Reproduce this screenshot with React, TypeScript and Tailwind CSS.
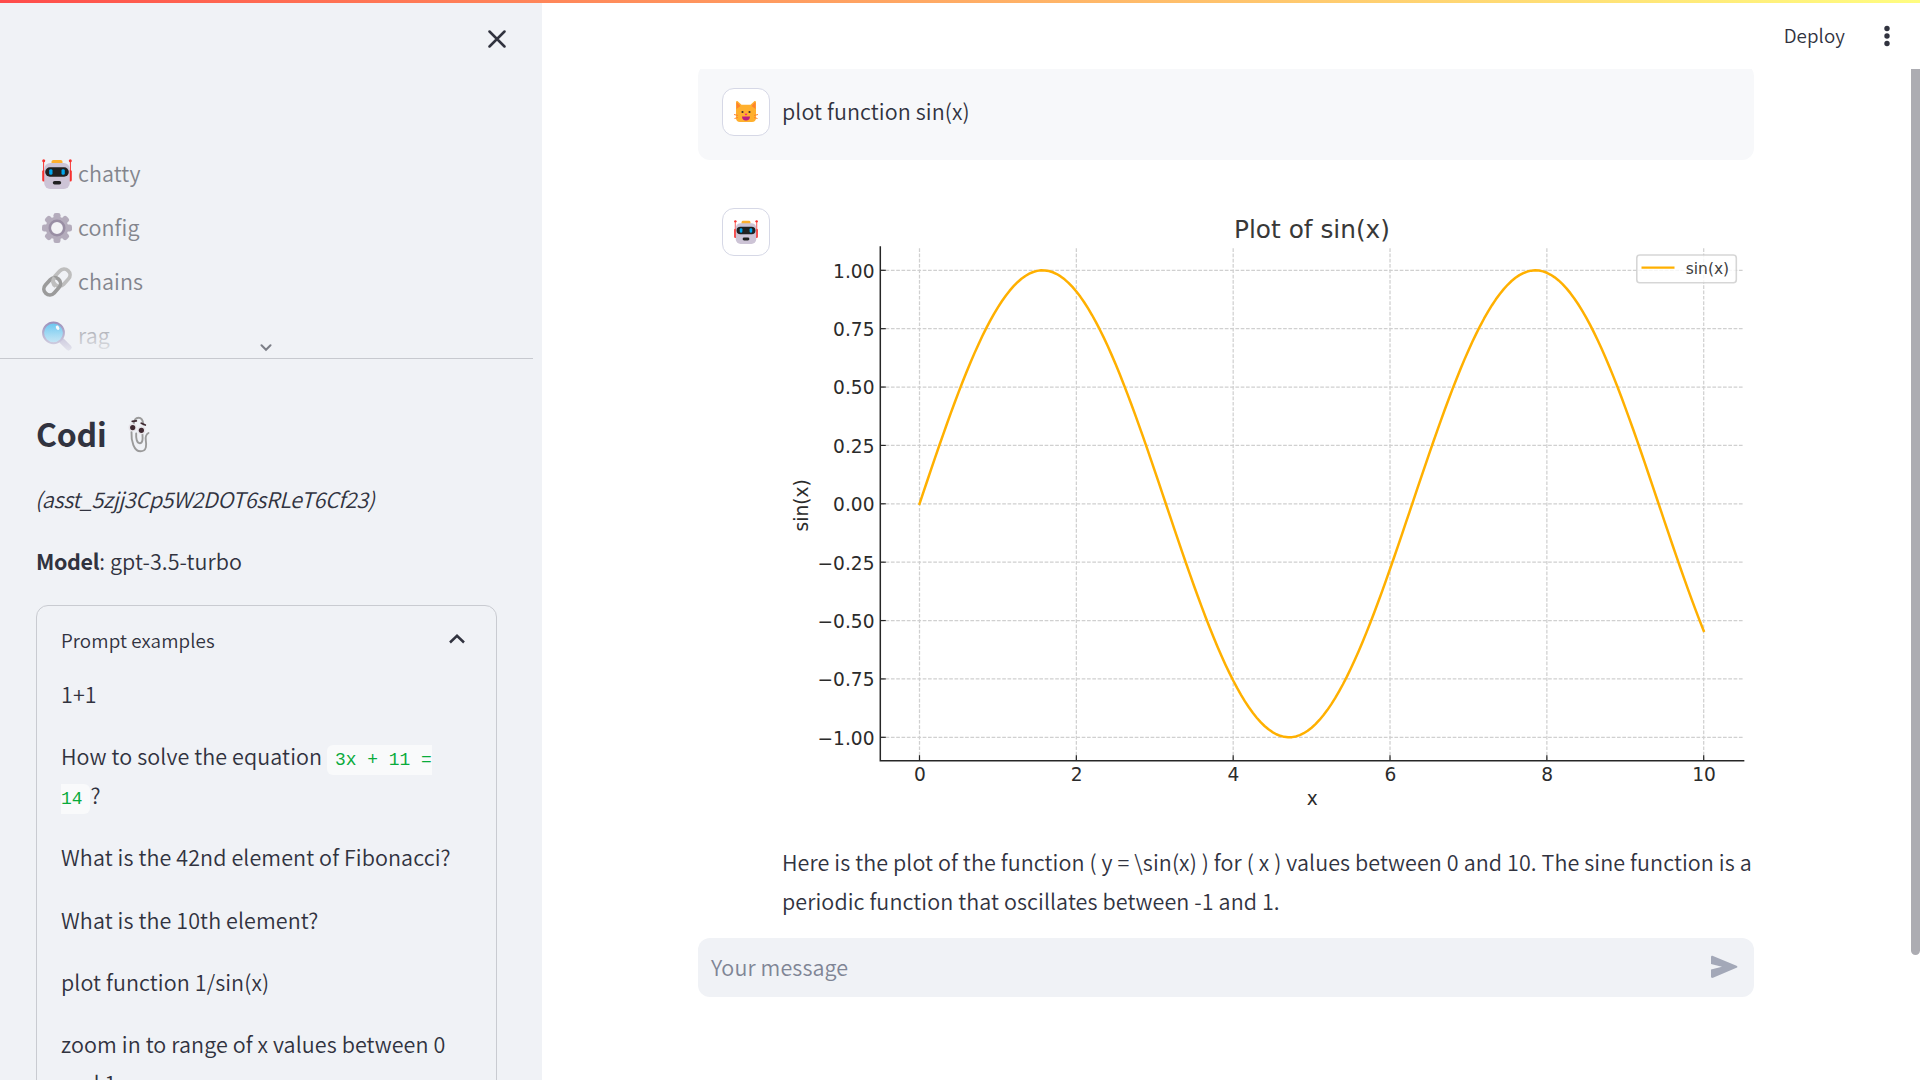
import React from "react";

const X0 = 919.5 - 783;
const XS = 78.42;
const Y0 = 503.8 - 208;
const YS = 233.5;
const LEFT = 97.3;
const RIGHT = 960.6;
const TOP = 39;
const BOTTOM = 552.7;

const px = (v: number) => X0 + v * XS;
const py = (v: number) => Y0 - v * YS;

const curve = Array.from({ length: 201 }, (_, i) => {
  const x = i / 20;
  return `${i === 0 ? "M" : "L"}${px(x).toFixed(2)} ${py(Math.sin(x)).toFixed(2)}`;
}).join("");

const xTicks = [0, 2, 4, 6, 8, 10];
const yTicks = [1, 0.75, 0.5, 0.25, 0, -0.25, -0.5, -0.75, -1];

function SineChart() {
  return (
    <svg width="971" height="610" viewBox="0 0 971 610" className="block font-['DejaVu_Sans'] font-normal tracking-normal" fill="#2b2b2b">
      <g stroke="#d0d0d0" strokeWidth="1.25" strokeDasharray="3.7 1.6" fill="none">
        {xTicks.map((t) => (
          <path key={t} d={`M${px(t)} ${BOTTOM}V${TOP}`} />
        ))}
        {yTicks.map((t) => (
          <path key={t} d={`M${LEFT} ${py(t)}H${RIGHT}`} />
        ))}
      </g>
      <path d={curve} fill="none" stroke="#FFB000" strokeWidth="2.5" strokeLinejoin="round" strokeLinecap="square" />
      <g stroke="#262626" strokeWidth="1.5" fill="none">
        <path d={`M${LEFT} ${TOP}V${BOTTOM}H${RIGHT}`} strokeLinecap="square" />
        {xTicks.map((t) => (
          <path key={t} d={`M${px(t)} ${BOTTOM}v-5.5`} strokeWidth="1.2" />
        ))}
        {yTicks.map((t) => (
          <path key={t} d={`M${LEFT} ${py(t)}h5.5`} strokeWidth="1.2" />
        ))}
      </g>
      <g fontSize="18.6">
        {xTicks.map((t) => (
          <text key={t} x={px(t) + 0.3} y="572.8" textAnchor="middle">{t}</text>
        ))}
        {yTicks.map((t) => (
          <text key={t} x="91.5" y={py(t) + 7.4} textAnchor="end">
            {t.toFixed(2).replace("-", "−")}
          </text>
        ))}
        <text x="529.3" y="597" textAnchor="middle">x</text>
        <text transform="translate(25 297.3) rotate(-90)" textAnchor="middle">sin(x)</text>
      </g>
      <text x="529" y="30" fontSize="24.8" textAnchor="middle" fill="#383838">Plot of sin(x)</text>
      <rect x="853.8" y="47" width="99.5" height="27.8" rx="3" fill="#fff" fillOpacity="0.8" stroke="#cccccc" strokeOpacity="0.8" strokeWidth="1.6" />
      <path d="M858.5 59.6h33" stroke="#FFB000" strokeWidth="2.4" />
      <text x="902.7" y="65.7" fontSize="15.5" fill="#404040">sin(x)</text>
    </svg>
  );
}

function Robot({ className }: { className: string }) {
  return (
    <svg viewBox="0 0 30 30" className={className}>
      <path d="M1.6 1.5v14M28.4 1.5v14" stroke="#F8312F" strokeWidth="1" />
      <circle cx="1.7" cy="1.7" r="1.5" fill="#F8312F" />
      <circle cx="28.3" cy="1.7" r="1.5" fill="#F8312F" />
      <rect x="0.2" y="11" width="4" height="11.5" rx="1.5" fill="#F8312F" />
      <rect x="25.8" y="11" width="4" height="11.5" rx="1.5" fill="#F8312F" />
      <rect x="9.5" y="1" width="11" height="6" rx="1.8" fill="#FFB02E" />
      <rect x="2.2" y="4" width="25.6" height="26" rx="6" fill="#CDC4D6" />
      <rect x="3.2" y="8.3" width="23.6" height="9.4" rx="4.7" fill="#212121" />
      <rect x="7.2" y="10.2" width="3.3" height="5.6" rx="1.4" fill="#00A6ED" />
      <rect x="19.5" y="10.2" width="3.3" height="5.6" rx="1.4" fill="#00A6ED" />
      <rect x="10.8" y="22" width="8.4" height="3.6" rx="1.8" fill="#212121" />
    </svg>
  );
}

function Gear() {
  return (
    <svg viewBox="0 0 30 30" className="size-[30px]">
      {[0, 45, 90, 135].map((a) => (
        <rect key={a} x="11.5" y="0" width="7" height="30" rx="2.3" fill="#B4ACBC" transform={`rotate(${a} 15 15)`} />
      ))}
      <circle cx="15" cy="15" r="11.3" fill="#B4ACBC" />
      <circle cx="15" cy="15" r="7.2" fill="#F3F3F6" stroke="#998EA4" strokeWidth="2.6" />
    </svg>
  );
}

function Chain() {
  return (
    <svg viewBox="0 0 30 30" className="size-[30px]" fill="none" strokeWidth="3.7">
      <rect x="10.2" y="4.7" width="19" height="11.8" rx="5.9" stroke="#BEBEBE" transform="rotate(-48 19.7 10.6)" />
      <rect x="0.7" y="13.4" width="19" height="11.8" rx="5.9" stroke="#9B9B9B" transform="rotate(-48 10.2 19.3)" />
      <path d="M12.5 10.4C9.8 13.500 10.600 17.500 13.600 19" stroke="#BEBEBE" />
    </svg>
  );
}

function Magnifier() {
  return (
    <svg viewBox="0 0 30 30" className="size-[30px]">
      <defs>
        <linearGradient id="lens" x1="0" y1="0" x2="0" y2="1">
          <stop offset="0" stopColor="#35B5EE" />
          <stop offset="1" stopColor="#6CCBF2" />
        </linearGradient>
      </defs>
      <path d="M20.500 20.500l6 6" stroke="#9D94BC" strokeWidth="6" strokeLinecap="round" />
      <circle cx="11.5" cy="11.8" r="10.4" fill="url(#lens)" stroke="#8070A8" strokeWidth="2" />
      <ellipse cx="15.6" cy="6.8" rx="1.6" ry="2.3" fill="#fff" transform="rotate(-30 15.6 6.8)" />
    </svg>
  );
}

function Cat() {
  return (
    <svg viewBox="0 0 24 24" className="size-6">
      <path d="M2 10V2.500C2 1 3 .6 4 1.500L7.500 4.800h9L20 1.500c1-.9 2-.5 2 1V18c0 2.500-1.500 4-4 4H6c-2.500 0-4-1.500-4-4z" fill="#FFB02E" />
      <path d="M2.500 9V3.500c0-1 .5-1.200 1.200-.5L6.500 6zM21.500 9V3.500c0-1-.5-1.200-1.200-.5L17.500 6z" fill="#FF822D" />
      <circle cx="8.5" cy="12" r="1.1" fill="#402A32" />
      <circle cx="15.5" cy="12" r="1.1" fill="#402A32" />
      <path d="M10.500 13.800h3L12 15.400z" fill="#F70A8D" />
      <path d="M8 16.600h8c0 2.500-1.500 4-4 4s-4-1.500-4-4z" fill="#BB1D80" />
      <path d="M0 14.500l4 1M.5 18.500l3.500-1M24 14.500l-4 1M23.500 18.500l-3.500-1" stroke="#FF822D" strokeWidth="1" fill="none" />
    </svg>
  );
}

function Clip() {
  return (
    <svg viewBox="0 0 24 38" className="h-[38px] w-6" fill="none" strokeLinecap="round">
      <path d="M6.500 9C7 4 9 1.800 11.500 1.800S16 4 16.300 8.500M4.500 16C4 25 7 35.300 13.500 35.300c6.500 0 6-6.800 5.300-11-.5-3.500.2-6 2.700-7.300M9.200 17.500c-.3 4.500.5 9.700 3.500 9.700 3.500 0 3-5.500 2.700-9.200" stroke="#9B9B9B" strokeWidth="1.9" />
      <circle cx="5.5" cy="11.5" r="4" fill="#E6E3E8" />
      <circle cx="14.5" cy="14.3" r="4" fill="#E6E3E8" />
      <circle cx="5.7" cy="11.6" r="2.6" fill="#402A32" />
      <circle cx="14.4" cy="14.3" r="2.6" fill="#402A32" />
      <path d="M5.300 5.300l4-.5M14.300 7.200l4 1.800" stroke="#402A32" strokeWidth="1.8" />
    </svg>
  );
}

const pages = [
  { name: "chatty", icon: <Robot className="size-[30px]" /> },
  { name: "config", icon: <Gear /> },
  { name: "chains", icon: <Chain /> },
  { name: "rag", icon: <Magnifier /> },
];

function Sidebar() {
  return (
    <aside className="h-full w-[542px] shrink-0 overflow-hidden bg-[#f0f2f6]">
      <div className="flex h-[145px] justify-end pr-9 pt-[30px]">
        <svg viewBox="0 0 18 18" className="size-[18px]" stroke="#31333F" strokeWidth="2.5" strokeLinecap="round">
          <path d="M1.500 1.500l15 15M16.500 1.500l-15 15" />
        </svg>
      </div>
      <nav className="relative h-[214px] w-[533px] overflow-hidden border-b border-[#c7c9cf]">
        {pages.map((p) => (
          <a key={p.name} className="flex h-[54px] items-center gap-[6px] pl-[42px] leading-[54px] text-[#83858d]">
            <span className="pt-1">{p.icon}</span>
            <span className="pt-0.5">{p.name}</span>
          </a>
        ))}
        <div className="absolute inset-x-0 bottom-0 flex h-[48px] items-end justify-center bg-linear-to-b from-[#f0f2f600] to-[#f0f2f6] pb-[6px] pr-0.5">
          <svg viewBox="0 0 12 8" className="h-2 w-3" fill="none" stroke="#7c7e87" strokeWidth="2" strokeLinecap="round">
            <path d="M1.500 1.200L6 5.800l4.500-4.600" />
          </svg>
        </div>
      </nav>
      <div className="pl-9 pr-[45px] pt-[53px]">
        <h3 className="mb-[25px] flex h-[43px] items-start text-[32px] font-semibold leading-[42px] tracking-[-0.2px]">
          Codi
          <span className="ml-[20px] mt-1"><Clip /></span>
        </h3>
        <p className="-ml-px mb-6 italic tracking-[-0.31px]">(asst_5zjj3Cp5W2DOT6sRLeT6Cf23)</p>
        <p className="mb-6"><b className="font-semibold tracking-[-0.35px]">Model</b>: gpt-3.5-turbo</p>
        <section className="h-[600px] rounded-xl border border-[#c9cbd1] px-6 pt-[17px]">
          <div className="mb-[18.500px] flex items-center justify-between pr-[7px] text-[18.8px] leading-[33.6px]">
            Prompt examples
            <svg viewBox="0 0 16 10" className="mb-px h-2.5 w-4" fill="none" stroke="#31333F" strokeWidth="2.5">
              <path d="M1 8.500L8 1.800l7 6.700" />
            </svg>
          </div>
          <div className="flex flex-col gap-6">
            <p>1+1</p>
            <p className="pr-6">
              How to solve the equation{" "}
              <code className="rounded-md bg-[#f9fafb] px-2 py-[5px] font-['Liberation_Mono',monospace] text-[17.9px] font-normal leading-none tracking-normal text-[#09ab3b]">
                3x + 11 = 14
              </code>
              ?
            </p>
            <p className="whitespace-nowrap">What is the 42nd element of Fibonacci?</p>
            <p>What is the 10th element?</p>
            <p>plot function 1/sin(x)</p>
            <p>zoom in to range of x values between 0 and 1</p>
          </div>
        </section>
      </div>
    </aside>
  );
}

function Avatar({ children }: { children: React.ReactNode }) {
  return (
    <div className="flex size-12 shrink-0 items-center justify-center rounded-xl border border-[#d6d8e6] bg-white">
      {children}
    </div>
  );
}

export default function App() {
  return (
    <div className="relative flex h-[1080px] w-[1920px] overflow-hidden bg-white font-['Noto_Sans_CJK_SC',sans-serif] text-[21.5px] font-[350] leading-[38.4px] tracking-[0.095px] text-[#31333f]">
      <Sidebar />
      <main className="flex min-w-0 flex-1 flex-col">
        <header className="flex h-[69px] shrink-0 items-center justify-end gap-[38px] pr-[29px] pt-[2px] text-[18.8px]">
          Deploy
          <svg viewBox="0 0 8 22" className="h-[22px] w-2" fill="#31333F">
            <circle cx="4" cy="3.5" r="2.7" />
            <circle cx="4" cy="11" r="2.7" />
            <circle cx="4" cy="18.5" r="2.7" />
          </svg>
        </header>
        <div className="flex flex-1 justify-between">
          <div className="ml-[156px] w-[1056px]">
            <div className="h-[91px] overflow-hidden">
              <div className="-mt-[5px] flex h-24 gap-3 rounded-xl bg-[#f7f8fa] pl-6 pt-6">
                <Avatar><Cat /></Avatar>
                <p className="pt-1">plot function sin(x)</p>
              </div>
            </div>
            <div className="flex h-[778px] gap-3 pl-6 pt-12">
              <Avatar><Robot className="size-6" /></Avatar>
              <div className="w-[972px]">
                <div className="pl-px"><SineChart /></div>
                <p className="mt-6 whitespace-nowrap leading-[39px]">
                  Here is the plot of the function ( y = \sin(x) ) for ( x ) values between 0 and 10. The sine function is a
                  <br />
                  periodic function that oscillates between -1 and 1.
                </p>
              </div>
            </div>
            <div className="flex h-[59px] items-center justify-between rounded-xl bg-[#f0f2f6] pl-[13px] pr-4 text-[#7f8595]">
              <span>Your message</span>
              <svg viewBox="0 0 28 24" className="mb-px h-6 w-7" fill="#A3A8B8">
                <path d="M1 2.200C1 .9 2 .5 3 .9L26.500 10.700c1.200.5 1.200 1.600 0 2.100L3 22.800c-1 .4-2 0-2-1.300v-7L12 11.800 1 9.100z" />
              </svg>
            </div>
          </div>
          <div className="h-[886px] w-[9px] rounded-b-full bg-[#acacb2]" />
        </div>
      </main>
      <div className="absolute inset-x-0 top-0 h-[3px] bg-linear-to-r from-[#ff4b4b] to-[#fffd80]" />
    </div>
  );
}
